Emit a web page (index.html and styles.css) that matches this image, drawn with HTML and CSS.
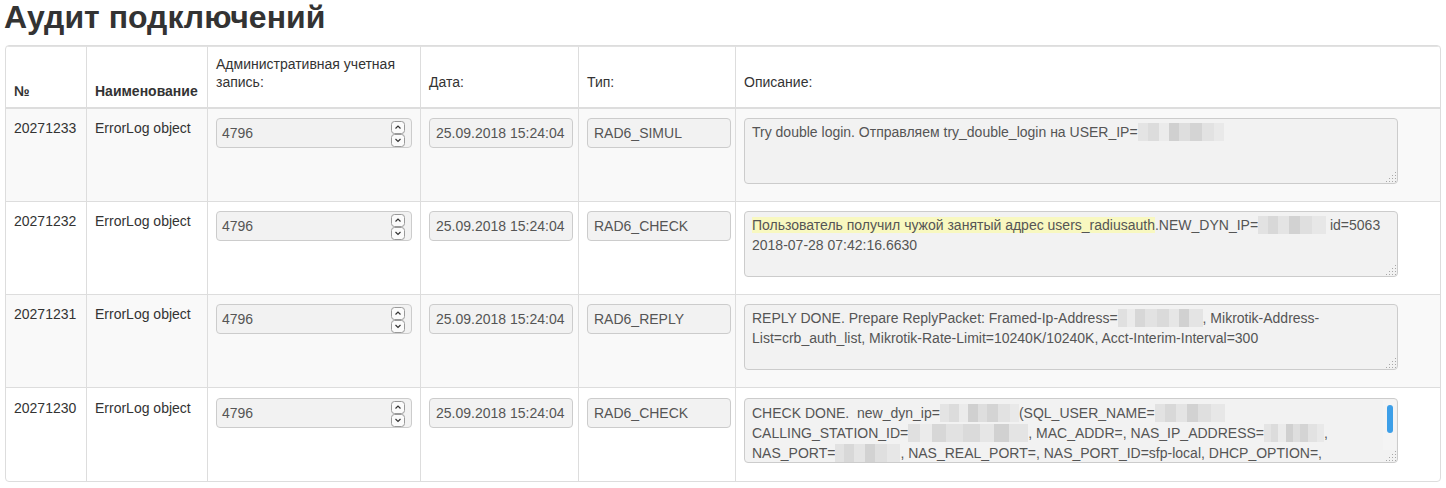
FILE: index.html
```html
<!DOCTYPE html>
<html lang="ru">
<head>
<meta charset="utf-8">
<title>Аудит подключений</title>
<link rel="stylesheet" href="styles.css">
</head>
<body>
<div class="page">
  <h1 class="title">Аудит подключений</h1>
  <div class="panel">
    <table class="grid">
      <colgroup>
        <col class="c-num"><col class="c-name"><col class="c-acc"><col class="c-date"><col class="c-type"><col class="c-desc">
      </colgroup>
      <thead>
        <tr>
          <th class="strong">№</th>
          <th class="strong">Наименование</th>
          <th><span class="lbl">Административная учетная запись:</span></th>
          <th><span class="lbl">Дата:</span></th>
          <th><span class="lbl">Тип:</span></th>
          <th><span class="lbl">Описание:</span></th>
        </tr>
      </thead>
      <tbody>
        <tr>
          <td>20271233</td>
          <td>ErrorLog object</td>
          <td><div class="field num"><span>4796</span><span class="spin"><svg width="14" height="26" viewBox="0 0 14 26"><rect x="0.5" y="0.5" width="13" height="12" rx="3" fill="#fbfbfb" stroke="#9a9a9a"/><rect x="0.5" y="13.5" width="13" height="12" rx="3" fill="#fbfbfb" stroke="#9a9a9a"/><path d="M4.5 7.5 L7 5 L9.5 7.5" fill="none" stroke="#333" stroke-width="1.2"/><path d="M4.5 18 L7 20.5 L9.5 18" fill="none" stroke="#333" stroke-width="1.2"/></svg></span></div></td>
          <td><div class="field short">25.09.2018 15:24:04</div></td>
          <td><div class="field short">RAD6_SIMUL</div></td>
          <td><div class="area"><div class="area-text">Try double login. Отправляем try_double_login на USER_IP=<span class="blur b1 w86"></span></div><span class="grip"></span></div></td>
        </tr>
        <tr>
          <td>20271232</td>
          <td>ErrorLog object</td>
          <td><div class="field num"><span>4796</span><span class="spin"><svg width="14" height="26" viewBox="0 0 14 26"><rect x="0.5" y="0.5" width="13" height="12" rx="3" fill="#fbfbfb" stroke="#9a9a9a"/><rect x="0.5" y="13.5" width="13" height="12" rx="3" fill="#fbfbfb" stroke="#9a9a9a"/><path d="M4.5 7.5 L7 5 L9.5 7.5" fill="none" stroke="#333" stroke-width="1.2"/><path d="M4.5 18 L7 20.5 L9.5 18" fill="none" stroke="#333" stroke-width="1.2"/></svg></span></div></td>
          <td><div class="field short">25.09.2018 15:24:04</div></td>
          <td><div class="field short">RAD6_CHECK</div></td>
          <td><div class="area"><div class="area-text"><span class="hl">Пользователь получил чужой занятый адрес users_radiusauth</span>.NEW_DYN_IP=<span class="blur b2 w68"></span> id=5063<br>2018-07-28 07:42:16.6630</div><span class="grip"></span></div></td>
        </tr>
        <tr>
          <td>20271231</td>
          <td>ErrorLog object</td>
          <td><div class="field num"><span>4796</span><span class="spin"><svg width="14" height="26" viewBox="0 0 14 26"><rect x="0.5" y="0.5" width="13" height="12" rx="3" fill="#fbfbfb" stroke="#9a9a9a"/><rect x="0.5" y="13.5" width="13" height="12" rx="3" fill="#fbfbfb" stroke="#9a9a9a"/><path d="M4.5 7.5 L7 5 L9.5 7.5" fill="none" stroke="#333" stroke-width="1.2"/><path d="M4.5 18 L7 20.5 L9.5 18" fill="none" stroke="#333" stroke-width="1.2"/></svg></span></div></td>
          <td><div class="field short">25.09.2018 15:24:04</div></td>
          <td><div class="field short">RAD6_REPLY</div></td>
          <td><div class="area"><div class="area-text">REPLY DONE. Prepare ReplyPacket: Framed-Ip-Address=<span class="blur b3 w85"></span>, Mikrotik-Address-<br>List=crb_auth_list, Mikrotik-Rate-Limit=10240K/10240K, Acct-Interim-Interval=300</div><span class="grip"></span></div></td>
        </tr>
        <tr>
          <td>20271230</td>
          <td>ErrorLog object</td>
          <td><div class="field num"><span>4796</span><span class="spin"><svg width="14" height="26" viewBox="0 0 14 26"><rect x="0.5" y="0.5" width="13" height="12" rx="3" fill="#fbfbfb" stroke="#9a9a9a"/><rect x="0.5" y="13.5" width="13" height="12" rx="3" fill="#fbfbfb" stroke="#9a9a9a"/><path d="M4.5 7.5 L7 5 L9.5 7.5" fill="none" stroke="#333" stroke-width="1.2"/><path d="M4.5 18 L7 20.5 L9.5 18" fill="none" stroke="#333" stroke-width="1.2"/></svg></span></div></td>
          <td><div class="field short">25.09.2018 15:24:04</div></td>
          <td><div class="field short">RAD6_CHECK</div></td>
          <td><div class="area scroll"><div class="area-text">CHECK DONE.&nbsp; new_dyn_ip=<span class="blur b1 w79"></span>(SQL_USER_NAME=<span class="blur b2 w70"></span><br>CALLING_STATION_ID=<span class="blur b3 w120"></span>, MAC_ADDR=, NAS_IP_ADDRESS=<span class="blur b1 w60"></span>,<br>NAS_PORT=<span class="blur b2 w65"></span>, NAS_REAL_PORT=, NAS_PORT_ID=sfp-local, DHCP_OPTION=,</div><span class="track"><span class="thumb"></span></span><span class="grip"></span></div></td>
        </tr>
      </tbody>
    </table>
  </div>
</div>
</body>
</html>
```

FILE: styles.css
```css
* { box-sizing: border-box; }

html, body {
  margin: 0;
  padding: 0;
  background: #fff;
}

body {
  font-family: "Liberation Sans", Arial, Helvetica, sans-serif;
  font-size: 14px;
  line-height: 20px;
  color: #333;
}

.page {
  padding: 0 5px;
}

.title {
  margin: 0 0 10px -1px;
  padding-top: 0;
  font-size: 32px;
  line-height: 35px;
  font-weight: bold;
  color: #333;
}

.panel {
  width: 1436px;
  border: 1px solid #ddd;
  border-radius: 4px;
  overflow: hidden;
}

.grid {
  width: 100%;
  table-layout: fixed;
  border-collapse: separate;
  border-spacing: 0;
}

.c-num { width: 80px; }
.c-name { width: 121px; }
.c-acc { width: 213px; }
.c-date { width: 158px; }
.c-type { width: 157px; }
.c-desc { width: 705px; }

.grid th,
.grid td {
  border-left: 1px solid #ddd;
  text-align: left;
}

.grid th:first-child,
.grid td:first-child {
  border-left: 0;
}

.grid th {
  height: 63px;
  padding: 0 8px 6px;
  vertical-align: bottom;
  font-weight: normal;
  border-top: 1px solid #e2e2e2;
  border-bottom: 2px solid #ddd;
}

.grid th.strong {
  font-weight: bold;
}

.lbl {
  display: inline-block;
  line-height: 18px;
  margin-bottom: 10px;
}

.grid td {
  padding: 9px 8px 9px;
  vertical-align: top;
  white-space: nowrap;
}

.grid tbody tr + tr td {
  border-top: 1px solid #ddd;
}

.grid tbody tr:nth-child(odd) td {
  background: #f9f9f9;
}

.grid tbody tr:last-child td {
  padding-top: 10px;
  padding-bottom: 10px;
}

.field {
  display: flex;
  align-items: center;
  height: 30px;
  padding: 0 6px;
  border: 1px solid #ccc;
  border-radius: 4px;
  background: #f2f2f2;
  color: #555;
  font-size: 14px;
}

.field.num {
  width: 196px;
  justify-content: space-between;
  padding-left: 5px;
  padding-right: 6px;
}

.spin {
  display: flex;
  margin-top: 1px;
}

.field.short {
  width: 144px;
}

.area {
  position: relative;
  width: 654px;
  height: 66px;
  margin-bottom: 8px;
  border: 1px solid #ccc;
  border-radius: 4px;
  background: #f2f2f2;
  color: #555;
  overflow: hidden;
}

.area.scroll {
  height: 65px;
}

.area-text {
  padding: 3px 7px;
  line-height: 20px;
  white-space: nowrap;
}

.area.scroll .area-text {
  padding-top: 4px;
}

.hl {
  background: #f8f8c0;
}

.blur {
  display: inline-block;
  height: 18px;
  vertical-align: -4px;
}

.b1 {
  background: linear-gradient(90deg, #e4e4e4 0 12%, #dcdcdc 12% 24%, #ebebeb 24% 36%, #d0d0d0 36% 48%, #dedede 48% 60%, #d4d4d4 60% 74%, #e2e2e2 74% 88%, #e9e9e9 88% 100%);
}

.b2 {
  background: linear-gradient(90deg, #e2e2e2 0 14%, #d8d8d8 14% 30%, #e4e4e4 30% 46%, #d2d2d2 46% 62%, #dfdfdf 62% 80%, #e7e7e7 80% 100%);
}

.b3 {
  background: linear-gradient(90deg, #e0e0e0 0 10%, #ebebeb 10% 20%, #d7d7d7 20% 32%, #e2e2e2 32% 46%, #dadada 46% 60%, #e6e6e6 60% 72%, #d1d1d1 72% 84%, #e4e4e4 84% 100%);
}

.w60 { width: 60px; }
.w65 { width: 65px; }
.w68 { width: 68px; }
.w70 { width: 70px; }
.w79 { width: 79px; }
.w85 { width: 85px; }
.w86 { width: 86px; }
.w120 { width: 120px; }

.grip {
  position: absolute;
  right: 1px;
  bottom: 1px;
  width: 11px;
  height: 11px;
  background:
    radial-gradient(circle, #a8a8a8 0.8px, transparent 1px) 0 0 / 3px 3px;
  clip-path: polygon(100% 0, 100% 100%, 0 100%);
}

.track {
  position: absolute;
  top: 1px;
  right: 1px;
  width: 13px;
  height: 50px;
  background: #f4f4f4;
  display: flex;
  justify-content: center;
  padding-top: 5px;
}

.thumb {
  display: block;
  width: 6px;
  height: 28px;
  border-radius: 3px;
  background: #3d9fe8;
}
```
